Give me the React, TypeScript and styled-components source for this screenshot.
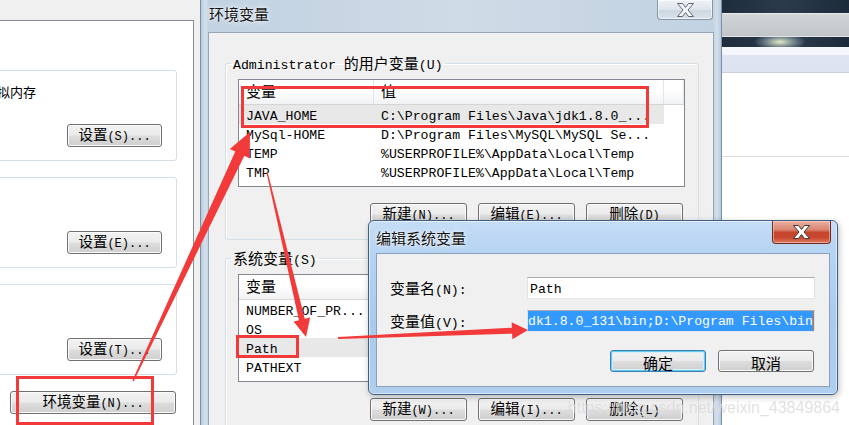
import React from 'react';
import styled, { createGlobalStyle, css } from 'styled-components';

const RED = '#f23a3a';
const HAN = /([\u3400-\u9fff]+)/;

const GlobalStyle = createGlobalStyle`
  html, body {
    margin: 0;
    padding: 0;
    background: #fff;
  }
  body {
    overflow: hidden;
  }
`;

const Zh = styled.span<{ $size?: number }>`
  font-family: 'Noto Sans CJK SC', sans-serif;
  font-size: ${({ $size }) => $size ?? 15}px;
  line-height: 1;
`;

// wraps the Chinese runs so they get the wider SimSun-like size
const mix = (text: string, size?: number) =>
  text.split(HAN).map((part, i) =>
    i % 2 === 1 ? (
      <Zh key={i} $size={size}>
        {part}
      </Zh>
    ) : (
      part
    )
  );

const userVars = [
  { name: 'JAVA_HOME', value: 'C:\\Program Files\\Java\\jdk1.8.0_...' },
  { name: 'MySql-HOME', value: 'D:\\Program Files\\MySQL\\MySQL Se...' },
  { name: 'TEMP', value: '%USERPROFILE%\\AppData\\Local\\Temp' },
  { name: 'TMP', value: '%USERPROFILE%\\AppData\\Local\\Temp' },
];

const systemVars = [
  { name: 'NUMBER_OF_PR...', value: '4' },
  { name: 'OS', value: 'Windows_NT' },
  { name: 'Path', value: 'C:\\ProgramData\\Oracle\\Java\\ja...' },
  { name: 'PATHEXT', value: '.COM;.EXE;.BAT;.CMD;.VBS;...' },
];

const XGlyph = ({ fill, outline }: { fill: string; outline: string }) => (
  <svg width="17" height="14" viewBox="0 0 17 14">
    <polygon
      points="0.5,0.5 5.5,0.5 8.5,4.5 11.5,0.5 16.5,0.5 11,7 16.5,13.5 11.5,13.5 8.5,9.5 5.5,13.5 0.5,13.5 6,7"
      fill={fill}
      stroke={outline}
      strokeWidth="1"
      strokeLinejoin="round"
    />
  </svg>
);

export default function App() {
  return (
    <>
      <GlobalStyle />
      <Desktop>
        <SysWindow>
          <TabPage>
            <SettingsGroup>
              <Caption>虚拟内存</Caption>
              <WinButton $w={95}>{mix('设置(S)...', 14.5)}</WinButton>
            </SettingsGroup>
            <SettingsGroup>
              <WinButton $w={95}>{mix('设置(E)...', 14.5)}</WinButton>
            </SettingsGroup>
            <SettingsGroup>
              <WinButton $w={95}>{mix('设置(T)...', 14.5)}</WinButton>
            </SettingsGroup>
            <EnvButton $w={166}>{mix('环境变量(N)...', 14.5)}</EnvButton>
          </TabPage>
        </SysWindow>

        <AppWindow>
          <DarkBand />
          <ToolBand />
          <GlowBand />
          <RibbonBand />
          <Sheet />
        </AppWindow>

        <EnvWindow>
          <TitleBar>
            <WindowTitle>环境变量</WindowTitle>
            <InactiveClose>
              <XGlyph fill="#f4f6f8" outline="#5d6873" />
            </InactiveClose>
          </TitleBar>
          <ClientArea>
            <GroupBox>
              <GroupLegend>{mix('Administrator 的用户变量(U)')}</GroupLegend>
              <ListView>
                <ListHeader>
                  <HeaderCell>{mix('变量')}</HeaderCell>
                  <HeaderCell>{mix('值')}</HeaderCell>
                  <HeaderCell />
                </ListHeader>
                {userVars.map((v, i) => (
                  <ListRow key={v.name} $selected={i === 0}>
                    <ListCell>{v.name}</ListCell>
                    <ListCell>{v.value}</ListCell>
                  </ListRow>
                ))}
              </ListView>
              <ButtonRow>
                <WinButton $w={97}>{mix('新建(N)...', 14.5)}</WinButton>
                <WinButton $w={97}>{mix('编辑(E)...', 14.5)}</WinButton>
                <WinButton $w={97}>{mix('删除(D)', 14.5)}</WinButton>
              </ButtonRow>
            </GroupBox>
            <GroupBox>
              <GroupLegend>{mix('系统变量(S)')}</GroupLegend>
              <ListView>
                <ListHeader>
                  <HeaderCell>{mix('变量')}</HeaderCell>
                  <HeaderCell>{mix('值')}</HeaderCell>
                  <HeaderCell />
                </ListHeader>
                {systemVars.map((v) => (
                  <ListRow key={v.name} $selected={v.name === 'Path'}>
                    <ListCell>{v.name}</ListCell>
                    <ListCell>{v.value}</ListCell>
                  </ListRow>
                ))}
              </ListView>
              <ButtonRow>
                <WinButton $w={97}>{mix('新建(W)...', 14.5)}</WinButton>
                <WinButton $w={97}>{mix('编辑(I)...', 14.5)}</WinButton>
                <WinButton $w={97}>{mix('删除(L)', 14.5)}</WinButton>
              </ButtonRow>
            </GroupBox>
          </ClientArea>
        </EnvWindow>

        <EditDialog>
          <TitleBar>
            <DialogTitle>编辑系统变量</DialogTitle>
            <RedClose>
              <XGlyph fill="#ffffff" outline="#3b3b3b" />
            </RedClose>
          </TitleBar>
          <DialogClient>
            <FieldGrid>
              <FieldLabel>{mix('变量名(N):')}</FieldLabel>
              <TextBox>Path</TextBox>
              <FieldLabel>{mix('变量值(V):')}</FieldLabel>
              <TextBox $flush>
                <Selection>dk1.8.0_131\bin;D:\Program Files\bin</Selection>
              </TextBox>
            </FieldGrid>
            <DialogButtons>
              <DialogButton $w={96} $h={22} $default>
                {mix('确定', 15)}
              </DialogButton>
              <DialogButton $w={96} $h={22}>
                {mix('取消', 15)}
              </DialogButton>
            </DialogButtons>
          </DialogClient>
        </EditDialog>

        <Callout $x={241} $y={86} $w={408} $h={42} />
        <Callout $x={236} $y={335} $w={63} $h={23} />
        <Callout $x={16} $y={376} $w={138} $h={49} />

        <Arrows width={849} height={425} viewBox="0 0 849 425">
          <polygon
            fill={RED}
            points="132.28,380.66 235.26,151.59 229.83,149.04 250,132 249.75,158.4 244.32,155.85 133.72,381.34"
          />
          <polygon
            fill={RED}
            points="266.42,172.14 298.94,320.17 293.59,321.44 306,337 310.13,317.52 304.78,318.79 267.58,171.86"
          />
          <polygon
            fill={RED}
            points="337.96,337 511.88,327.67 511.65,322.18 528,330 512.37,339.16 512.14,333.67 338.04,339"
          />
        </Arrows>

        <Watermark>https://blog.csdn.net/weixin_43849864</Watermark>
      </Desktop>
    </>
  );
}

const Desktop = styled.div`
  position: relative;
  width: 849px;
  height: 425px;
  overflow: hidden;
  background: #fff;
  font-family: 'Liberation Mono', 'Noto Sans CJK SC', monospace;
  font-size: 13.2px;
  color: #000;
`;

/* ---- system properties window (left, behind) ---- */

const SysWindow = styled.div`
  position: absolute;
  left: 0;
  top: 0;
  width: 200px;
  height: 425px;
  background: #f0f0f0;
  overflow: hidden;
`;

const TabPage = styled.div`
  margin-top: 20px;
  width: 194px;
  height: 405px;
  box-sizing: border-box;
  padding-top: 49px;
  background: #fff;
  border-top: 1px solid #898c95;
  border-right: 1px solid #898c95;
  display: flex;
  flex-direction: column;
  gap: 16px;
`;

const SettingsGroup = styled.div`
  margin-left: -13px;
  width: 190px;
  height: 91px;
  flex: none;
  box-sizing: border-box;
  padding: 13px 14px 13px;
  border: 1px solid #d5dfe5;
  border-radius: 3px;
  display: flex;
  flex-direction: column;
  justify-content: flex-end;
  align-items: flex-end;
`;

const Caption = styled.div`
  align-self: flex-start;
  margin: 0 0 auto -18px;
  font-family: 'Noto Sans CJK SC', sans-serif;
  font-size: 13px;
  line-height: 16px;
  white-space: nowrap;
`;

/* ---- buttons ---- */

const WinButton = styled.button<{ $w: number; $h?: number; $default?: boolean }>`
  width: ${({ $w }) => $w}px;
  height: ${({ $h }) => $h ?? 23}px;
  flex: none;
  box-sizing: border-box;
  padding: 2px 0 0;
  border: 1px solid #707070;
  border-radius: 3px;
  background: linear-gradient(#f2f2f2 0%, #ebebeb 48%, #dddddd 52%, #cfcfcf 100%);
  box-shadow: inset 0 0 0 1px #fbfbfb;
  font-family: 'Liberation Mono', 'Noto Sans CJK SC', monospace;
  font-size: 12px;
  line-height: 19px;
  color: #000;
  white-space: nowrap;

  ${({ $default }) =>
    $default &&
    css`
      border-color: #3c7fb1;
      box-shadow: inset 0 0 0 1px #64cbf3, inset 0 0 0 2px #d6eefa;
    `}
`;

const EnvButton = styled(WinButton)`
  margin-left: 10px;
`;

const DialogButton = styled(WinButton)`
  padding-top: 4px;
`;

/* ---- the application window on the right, behind everything ---- */

const AppWindow = styled.div`
  position: absolute;
  left: 722px;
  top: 0;
  width: 127px;
  height: 425px;
  background: #fff;
  display: flex;
  flex-direction: column;
`;

const DarkBand = styled.div`
  height: 13px;
  background: linear-gradient(90deg, #1e2c3c, #2b3b4d 50%, #1c2a39);
`;

const ToolBand = styled.div`
  height: 24px;
  box-sizing: border-box;
  border-top: 1px solid #e8eaec;
  border-bottom: 1px solid #e3e6e9;
  background: linear-gradient(#d3d6d8, #c2c5c7);
`;

const GlowBand = styled.div`
  height: 10px;
  background:
    radial-gradient(ellipse 26px 9px at 58px 5px, rgba(236, 244, 205, 0.95), rgba(200, 220, 225, 0.4) 60%, transparent 100%),
    linear-gradient(90deg, #1f2d3d, #2a394a 60%, #1d2a38);
`;

const RibbonBand = styled.div`
  height: 26px;
  box-sizing: border-box;
  border-bottom: 1px solid #c9cfdc;
  background: linear-gradient(#f7f8fc 0%, #f3f5fa 30%, #dfe4f2 32%, #dde3f1 100%);
`;

const Sheet = styled.div`
  height: 83px;
  flex: none;
  border-bottom: 1px solid #dcdcdc;
`;

/* ---- 环境变量 window ---- */

const EnvWindow = styled.div`
  position: absolute;
  left: 200px;
  top: 0;
  width: 522px;
  height: 440px;
  box-sizing: border-box;
  padding: 0 7px;
  border-left: 1px solid #7c8ea2;
  border-right: 1px solid #7c8ea2;
  background: linear-gradient(90deg, #b6cade 0px, #d3dfeb 4px, #c2d2e2 8px, #cfdbe6 50%, #c2d2e2 calc(100% - 8px), #d3dfeb calc(100% - 4px), #b6cade 100%);
  display: flex;
  flex-direction: column;
`;

const TitleBar = styled.div`
  height: 32px;
  flex: none;
  display: flex;
  justify-content: space-between;
  align-items: flex-start;
`;

const WindowTitle = styled.div`
  margin: 5px 0 0 1px;
  font-family: 'Noto Sans CJK SC', sans-serif;
  font-size: 15px;
  line-height: 18px;
  color: #111;
  text-shadow: 0 0 6px rgba(255, 255, 255, 0.9), 0 0 2px #fff;
`;

const InactiveClose = styled.div`
  width: 56px;
  height: 20px;
  margin-right: 1px;
  box-sizing: border-box;
  border: 1px solid #8796a6;
  border-top: none;
  border-radius: 0 0 4px 4px;
  background: linear-gradient(#eef2f6 0%, #dde5ec 50%, #ccd7e1 52%, #d9e2ea 100%);
  box-shadow: inset 0 0 0 1px rgba(255, 255, 255, 0.6);
  display: flex;
  align-items: center;
  justify-content: center;
`;

const ClientArea = styled.div`
  flex: 1;
  box-sizing: border-box;
  padding: 22px 14px 0 16px;
  background: #f0f0f0;
  border: 1px solid #96a6b7;
  display: flex;
  flex-direction: column;
`;

const GroupBox = styled.fieldset`
  margin: 0;
  min-width: 0;
  padding: 8px 13px 13px 12px;
  border: 1px solid #d5dfe5;
  border-radius: 3px;
  box-shadow: inset 1px 1px 0 #fff;

  & + & {
    margin-top: 10px;
  }
`;

const GroupLegend = styled.legend`
  height: 16px;
  margin-left: -7px;
  padding: 0 2px;
  font-size: 13.2px;
  line-height: 16px;
  white-space: nowrap;
`;

const ListView = styled.div`
  width: 447px;
  height: 108px;
  box-sizing: border-box;
  border: 1px solid #828790;
  background: #fff;
  overflow: hidden;
`;

const ListHeader = styled.div`
  display: grid;
  grid-template-columns: 135px 290px 1fr;
  height: 25px;
  box-sizing: border-box;
  border-bottom: 1px solid #d5d5d5;
  background: linear-gradient(#fff 0%, #fff 45%, #f1f2f4 100%);
`;

const HeaderCell = styled.div`
  box-sizing: border-box;
  padding: 3px 0 0 7px;
  border-right: 1px solid #e3e5e8;
  line-height: 21px;
  white-space: nowrap;
`;

const ListRow = styled.div<{ $selected?: boolean }>`
  display: grid;
  grid-template-columns: 135px 290px;
  width: 425px;
  height: 19px;
  line-height: 19px;
  background: ${({ $selected }) => ($selected ? '#e8e8e8' : 'transparent')};
`;

const ListCell = styled.div`
  box-sizing: border-box;
  padding: 2px 0 0 7px;
  white-space: nowrap;
  overflow: hidden;
`;

const ButtonRow = styled.div`
  display: flex;
  justify-content: flex-end;
  gap: 11px;
  margin-top: 16px;
  padding-right: 2px;
`;

/* ---- 编辑系统变量 dialog ---- */

const EditDialog = styled.div`
  position: absolute;
  left: 368px;
  top: 220px;
  width: 470px;
  height: 175px;
  box-sizing: border-box;
  padding: 0 7px 7px;
  border: 1px solid #3f5f84;
  border-radius: 6px;
  background: linear-gradient(#c6ddf6 0%, #b6d3f2 18%, #a9caee 60%, #b0cfef 100%);
  box-shadow: inset 0 0 0 1px rgba(255, 255, 255, 0.55), 1px 2px 6px rgba(0, 0, 0, 0.25);
  display: flex;
  flex-direction: column;
`;

const DialogTitle = styled(WindowTitle)`
  margin: 8px 0 0;
`;

const RedClose = styled.div`
  width: 59px;
  height: 23px;
  margin-right: -1px;
  box-sizing: border-box;
  border: 1px solid #6e2a1e;
  border-top: none;
  border-radius: 0 0 4px 4px;
  background: linear-gradient(#eab0a3 0%, #d98470 40%, #c5452d 52%, #c9472f 75%, #de7a5f 100%);
  box-shadow: inset 0 0 0 1px rgba(255, 220, 210, 0.5);
  display: flex;
  align-items: center;
  justify-content: center;
`;

const DialogClient = styled.div`
  flex: 1;
  box-sizing: border-box;
  padding: 23px 14px 0 13px;
  background: #f0f0f0;
  border: 1px solid #8aa1bb;
  display: flex;
  flex-direction: column;
`;

const FieldGrid = styled.div`
  display: grid;
  grid-template-columns: 137px 288px;
  grid-auto-rows: 22px;
  row-gap: 11px;
  align-items: start;
`;

const FieldLabel = styled.div`
  height: 22px;
  padding-top: 3px;
  line-height: 22px;
  white-space: nowrap;
`;

const TextBox = styled.div<{ $flush?: boolean }>`
  height: 22px;
  box-sizing: border-box;
  padding: ${({ $flush }) => ($flush ? '0' : '3px 2px 0')};
  border: 1px solid;
  border-color: #abadb3 #dbdfe6 #e3e9ef #e2e3ea;
  background: #fff;
  line-height: 18px;
  white-space: nowrap;
  overflow: hidden;
`;

const Selection = styled.span`
  display: block;
  height: 20px;
  box-sizing: border-box;
  padding-top: 2px;
  line-height: 18px;
  background: #3399ff;
  color: #fff;
  border-right: 1px solid #d9761f;
`;

const DialogButtons = styled.div`
  display: flex;
  justify-content: flex-end;
  gap: 12px;
  margin-top: 18px;
  padding-right: 1px;
`;

/* ---- annotations drawn over the screenshot ---- */

const Callout = styled.div<{ $x: number; $y: number; $w: number; $h: number }>`
  position: absolute;
  left: ${({ $x }) => $x}px;
  top: ${({ $y }) => $y}px;
  width: ${({ $w }) => $w}px;
  height: ${({ $h }) => $h}px;
  box-sizing: border-box;
  border: 3px solid ${RED};
`;

const Arrows = styled.svg`
  position: absolute;
  left: 0;
  top: 0;
  pointer-events: none;
`;

const Watermark = styled.div`
  position: absolute;
  right: 9px;
  top: 400px;
  font-family: 'Liberation Sans', Arial, sans-serif;
  font-size: 16px;
  line-height: 16px;
  color: rgba(205, 205, 205, 0.6);
  text-shadow: 0 0 1px rgba(255, 255, 255, 0.5);
  white-space: nowrap;
  pointer-events: none;
`;
